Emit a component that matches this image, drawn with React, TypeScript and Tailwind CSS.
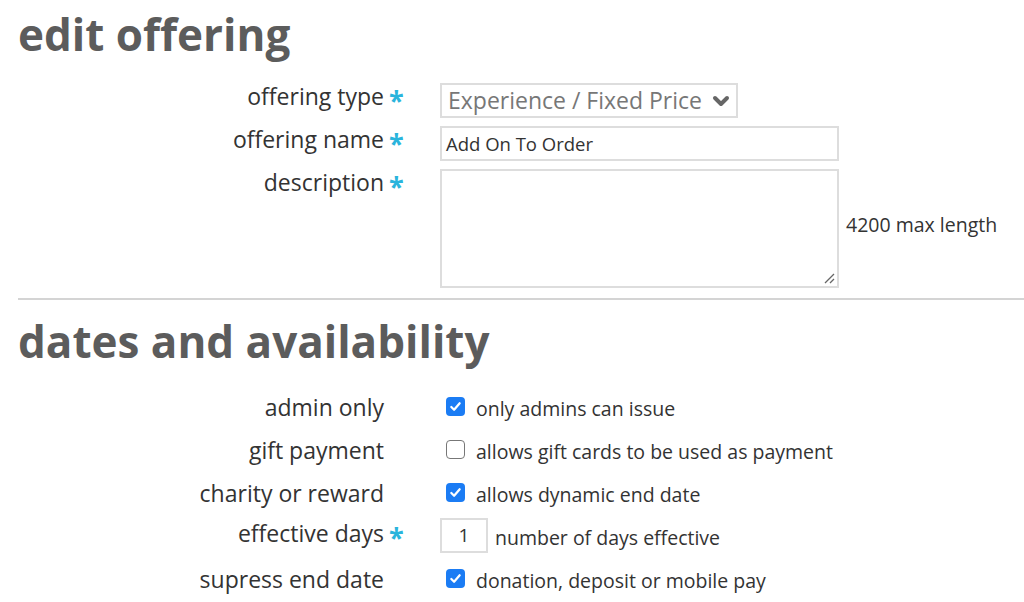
import { ChevronDown } from "lucide-react";

const font = { fontFamily: '"Open Sans", "Noto Sans", sans-serif' };

function Star() {
  return <span className="text-[27px] font-bold leading-none text-[#2ab4dc] relative top-[3px]">*</span>;
}

function Label({ text, required }: { text: string; required?: boolean }) {
  return (
    <div className="flex shrink-0 pl-[18px]">
      <div className="w-[366px] text-right text-[23px] leading-[26px] text-[#333]">{text}</div>
      <div className="w-[56px] pl-[5px] leading-[26px]">{required && <Star />}</div>
    </div>
  );
}

function Check({ on }: { on: boolean }) {
  return on ? (
    <span className="w-[19px] h-[19px] rounded-[4px] bg-[#1b7cf4] flex items-center justify-center">
      <svg width="13" height="13" viewBox="0 0 14 14" fill="none">
        <path d="M2.5 7.5l3 3 6-7" stroke="white" strokeWidth="2.4" strokeLinecap="round" strokeLinejoin="round" />
      </svg>
    </span>
  ) : (
    <span className="w-[19px] h-[19px] rounded-[4px] border-[1.5px] border-[#777] bg-white" />
  );
}

function CheckRow({ label, text, on }: { label: string; text: string; on: boolean }) {
  return (
    <div className="flex items-center h-[43px]">
      <Label text={label} />
      <div className="flex items-center pl-[6px] gap-[11px]">
        <Check on={on} />
        <span className="text-[19.5px] text-[#333] relative top-[2px]">{text}</span>
      </div>
    </div>
  );
}

export default function App() {
  return (
    <div className="w-[1024px] h-[602px] overflow-hidden bg-white" style={font}>
      <h1 className="pl-[18px] pt-[6px] text-[44px] font-bold leading-[56px] text-[#5c5c5c]">edit offering</h1>
      <div className="mt-[21px] flex flex-col gap-[8px]">
        <div className="flex items-start">
          <Label text="offering type" required />
          <div className="w-[298px] h-[35px] border-2 border-[#ddd] flex items-center pl-[6px] gap-[7px]">
            <span className="text-[23px] text-[#777] whitespace-nowrap">Experience / Fixed Price</span>
            <ChevronDown className="w-[24px] h-[24px] text-[#666] shrink-0" strokeWidth={4} />
          </div>
        </div>
        <div className="flex items-start">
          <Label text="offering name" required />
          <div className="w-[399px] h-[35px] border-2 border-[#ddd] flex items-center pl-[4px]">
            <span className="text-[18.5px] text-[#333]">Add On To Order</span>
          </div>
        </div>
        <div className="flex items-start">
          <Label text="description" required />
          <div className="w-[399px] h-[119px] border-2 border-[#ddd] relative">
            <svg className="absolute right-[2px] bottom-[2px]" width="12" height="12" viewBox="0 0 12 12">
              <path d="M11 2L2 11M11 7L7 11" stroke="#666" strokeWidth="1.3" />
            </svg>
          </div>
          <span className="self-center ml-[7px] mt-[-8px] text-[19.5px] text-[#333]">4200 max length</span>
        </div>
      </div>
      <div className="ml-[18px] mt-[10px] border-t-2 border-[#d4d4d4]" />
      <h2 className="pl-[18px] pt-[13px] text-[44px] font-bold leading-[56px] text-[#5c5c5c]">dates and availability</h2>
      <div className="mt-[16px] flex flex-col">
        <CheckRow label="admin only" text="only admins can issue" on />
        <CheckRow label="gift payment" text="allows gift cards to be used as payment" on={false} />
        <CheckRow label="charity or reward" text="allows dynamic end date" on />
        <div className="flex items-center h-[43px]">
          <Label text="effective days" required />
          <div className="w-[48px] h-[35px] border-2 border-[#ddd] flex items-center justify-center">
            <span className="text-[19px] text-[#333]">1</span>
          </div>
          <span className="ml-[7px] text-[19.5px] text-[#333] relative top-[2px]">number of days effective</span>
        </div>
        <CheckRow label="supress end date" text="donation, deposit or mobile pay" on />
      </div>
    </div>
  );
}
